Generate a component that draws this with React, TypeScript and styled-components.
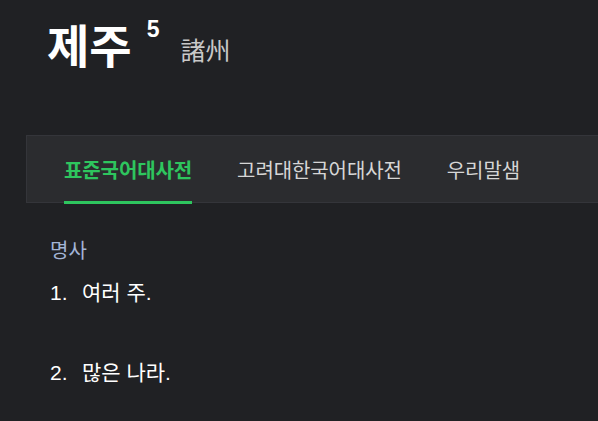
import styled, { createGlobalStyle } from 'styled-components';

const GlobalStyle = createGlobalStyle`
  html, body {
    margin: 0;
    padding: 0;
    background: #202124;
  }
  body {
    font-family: "Liberation Sans", "Noto Sans CJK KR", sans-serif;
    color: #ffffff;
  }
`;

const tabs = ['표준국어대사전', '고려대한국어대사전', '우리말샘'];

const App = () => {
  return (
    <Page>
      <GlobalStyle />
      <Header>
        <Word>제주</Word>
        <Sup>5</Sup>
        <Hanja>諸州</Hanja>
      </Header>
      <TabBar>
        {tabs.map((t, i) => (
          <Tab key={t} $active={i === 0}>{t}</Tab>
        ))}
      </TabBar>
      <Body>
        <Pos>명사</Pos>
        <Senses>
          <Sense><Num>1.</Num>여러 주.</Sense>
          <Sense><Num>2.</Num>많은 나라.</Sense>
        </Senses>
      </Body>
    </Page>
  );
};

const Page = styled.div`
  width: 598px;
  height: 421px;
  overflow: hidden;
  background: #202124;
`;

const Header = styled.div`
  display: flex;
  align-items: flex-start;
  padding: 11px 0 0 47px;
  height: 135px;
  box-sizing: border-box;
`;

const Word = styled.h1`
  margin: 0;
  font-family: "Noto Sans CJK KR", sans-serif;
  font-size: 46px;
  font-weight: 700;
  line-height: 64px;
`;

const Sup = styled.span`
  font-family: "Liberation Sans", sans-serif;
  font-size: 23px;
  font-weight: 700;
  margin: 5px 0 0 15px;
  line-height: 26px;
`;

const Hanja = styled.span`
  font-family: "Noto Sans CJK KR", sans-serif;
  font-size: 25px;
  color: #c8c8c8;
  margin: 21px 0 0 21px;
  line-height: 34px;
`;

const TabBar = styled.div`
  display: flex;
  gap: 45px;
  margin-left: 26px;
  height: 68px;
  padding-left: 37px;
  background: #2b2c2f;
  border: 1px solid #34353a;
  border-right: none;
  box-sizing: border-box;
`;

const Tab = styled.div<{ $active?: boolean }>`
  display: flex;
  align-items: center;
  font-family: "Noto Sans CJK KR", sans-serif;
  font-size: 20px;
  font-weight: ${p => (p.$active ? 700 : 400)};
  color: ${p => (p.$active ? '#2ec55e' : '#d6d6d6')};
  border-bottom: 3px solid ${p => (p.$active ? '#2ec55e' : 'transparent')};
  margin-bottom: -2px;
  padding-top: 2px;
  letter-spacing: -0.1px;
`;

const Body = styled.div`
  padding: 34px 0 0 50px;
`;

const Pos = styled.div`
  font-size: 20px;
  color: #a3b5d6;
  line-height: 28px;
`;

const Senses = styled.ol`
  list-style: none;
  margin: 13px 0 0;
  padding: 0;
  display: flex;
  flex-direction: column;
  gap: 51px;
`;

const Sense = styled.li`
  font-size: 21px;
  line-height: 29px;
  color: #ffffff;
`;

const Num = styled.span`
  display: inline-block;
  width: 32px;
`;

export default App;
